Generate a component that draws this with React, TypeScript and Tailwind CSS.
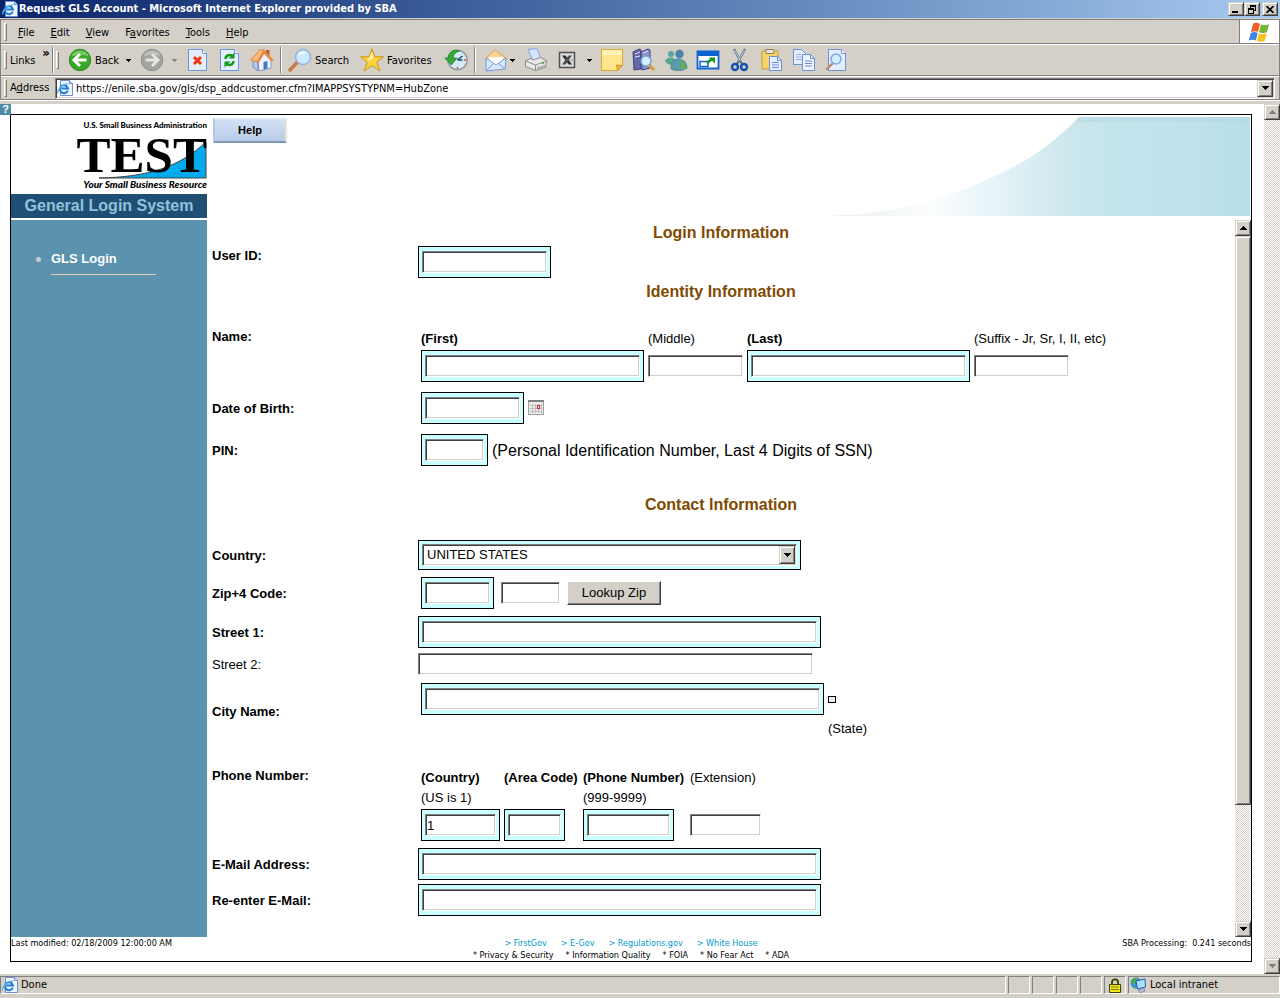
import type { ReactNode } from 'react';

// Shared bevels for the classic grey controls
const SUNKEN =
  'border border-t-[#808080] border-l-[#808080] border-r-white border-b-white shadow-[inset_1px_1px_0_#404040,inset_-1px_-1px_0_#d4d0c8]';
const RAISED =
  'bg-[#d4d0c8] border border-t-[#d4d0c8] border-l-[#d4d0c8] border-r-[#404040] border-b-[#404040] shadow-[inset_1px_1px_0_#fff,inset_-1px_-1px_0_#808080]';
const PANE = 'border border-t-[#808080] border-l-[#808080] border-r-white border-b-white';
const UI_FONT = "font-['DejaVu_Sans_Condensed','Noto_Sans',sans-serif]";

/* ---------- icons ---------- */

function Icon({ children, className = 'size-6' }: { children: ReactNode; className?: string }) {
  return (
    <svg viewBox="0 0 24 24" className={`${className} shrink-0`} aria-hidden="true">
      {children}
    </svg>
  );
}

function IeIcon() {
  return (
    <svg viewBox="0 0 16 16" className="size-4 shrink-0" aria-hidden="true">
      <path d="M3.5.5h9l3 3v12h-12z" fill="#f2f7ff" stroke="#6f8fd0" />
      <path d="M12.500 .5v3h3" fill="#c8dcf8" stroke="#6f8fd0" />
      <path d="M10.800 10.600A4 4 0 1 1 11 8.500H4.500" fill="none" stroke="#1c7bd8" strokeWidth="2" />
      <path d="M1 13.500C-.5 10 6 3.500 11.500 4" fill="none" stroke="#58b4f0" strokeWidth="1.200" />
    </svg>
  );
}

function Caret({ className = 'text-black' }: { className?: string }) {
  return (
    <svg viewBox="0 0 5 3" className={`h-[3px] w-[5px] shrink-0 ${className}`} shapeRendering="crispEdges" aria-hidden="true">
      <path d="M0 0h5v1H4v1H3v1H2V2H1V1H0z" fill="currentColor" />
    </svg>
  );
}

function Arrow({ up = false, className = 'text-black' }: { up?: boolean; className?: string }) {
  return (
    <svg viewBox="0 0 7 4" className={`h-1 w-[7px] ${className}`} shapeRendering="crispEdges" aria-hidden="true">
      <path
        d={up ? 'M3 0h1v1h1v1h1v1h1v1H0V3h1V2h1V1h1z' : 'M0 0h7v1H6v1H5v1H4v1H3V3H2V2H1V1H0z'}
        fill="currentColor"
      />
    </svg>
  );
}

const BackIcon = () => (
  <Icon>
    <circle cx="12" cy="12" r="10.700" fill="#38a826" stroke="#2c8420" />
    <path d="M3 9a9.500 9.500 0 0 1 18 0c-5-3-12-3-18 0z" fill="#8fd878" opacity=".7" />
    <path d="M18.500 12H7M12 6l-6 6 6 6" fill="none" stroke="#fff" strokeWidth="3" />
  </Icon>
);

const ForwardIcon = () => (
  <Icon>
    <circle cx="12" cy="12" r="10.700" fill="#a3a3a0" stroke="#8c8c8a" />
    <path d="M3 9a9.500 9.500 0 0 1 18 0c-5-3-12-3-18 0z" fill="#c8c8c6" opacity=".7" />
    <path d="M5.500 12H17M12 6l6 6-6 6" fill="none" stroke="#e6e4e0" strokeWidth="3" />
  </Icon>
);

const Sheet = () => (
  <>
    <path d="M2.500 1.500h14l4 4v17h-18z" fill="#e4eeff" stroke="#6f94e4" />
    <path d="M16.500 1.500v4h4" fill="#fff" stroke="#6f94e4" />
  </>
);

const StopIcon = () => (
  <Icon>
    <Sheet />
    <path d="M8 9l7 7M15 9l-7 7" stroke="#f03410" strokeWidth="3" />
  </Icon>
);

const RefreshIcon = () => (
  <Icon>
    <Sheet />
    <path d="M7.500 11c0-4 5-5 7-3M15.500 13c0 4-5 5-7 3" fill="none" stroke="#109a18" strokeWidth="2.400" />
    <path d="M16.500 4.500v6h-6zM6.500 19.500v-6h6z" fill="#109a18" />
  </Icon>
);

const HomeIcon = () => (
  <Icon>
    <path d="M16 2h3.500v7H16z" fill="#c05c38" />
    <path d="M8 13l6-8 7 7v8l-12 3z" fill="#eef4ff" stroke="#8098c8" />
    <path d="M3 12l5 2v9l-5-4z" fill="#b4c8f0" stroke="#7088c0" />
    <path d="M.8 12L10 1.500l4 .5-6 12.500z" fill="#fbb878" stroke="#d87830" strokeWidth=".8" />
    <path d="M14 2l9.200 10-2 1L14 5.500 8.500 14.500 7 14z" fill="#f09048" stroke="#d87830" strokeWidth=".6" />
    <path d="M13.500 14l4-1v7.500l-4 1z" fill="#4878c0" />
  </Icon>
);

const SearchIcon = () => (
  <Icon>
    <path d="M9.500 14L2 22" stroke="#c87848" strokeWidth="3.500" strokeLinecap="round" />
    <circle cx="15" cy="9" r="7.500" fill="#cfe8ff" stroke="#90b4e8" strokeWidth="1.600" />
    <path d="M10 8c1-4 6-5 8-3-2 0-6 1-8 3z" fill="#fff" />
  </Icon>
);

const StarIcon = () => (
  <Icon>
    <path
      d="M12 .8l2.800 8H23.500l-6.600 5.200 3 9L12 17.500l-7.800 5.500 3-9L.5 8.800h8.700z"
      fill="#fbd23c"
      stroke="#c89418"
      strokeLinejoin="round"
    />
    <path d="M12 4l1.500 6L7 14l2-4z" fill="#fff2a0" />
  </Icon>
);

const HistoryIcon = () => (
  <Icon>
    <circle cx="13.500" cy="12" r="9.700" fill="#d4ecf8" stroke="#8c9cac" strokeWidth="1.600" />
    <path d="M13.500 12l5-4M13.500 12h5" stroke="#284870" strokeWidth="1.500" />
    <path d="M13.500 19v2M20 12h2" stroke="#e04020" strokeWidth="1.500" />
    <path d="M16 3C9 0 4 5 4.500 10H.8l6.500 7 6-7H9.500C9 6.500 12 4 16 3z" fill="#38a838" stroke="#1c7c24" strokeWidth=".7" />
  </Icon>
);

const MailIcon = () => (
  <Icon>
    <path d="M2 10l9-8 11 8v2H2z" fill="#fbd490" stroke="#d8a050" />
    <path d="M5 9h14v8H5z" fill="#fff" />
    <path d="M2 10l10 7 10-7-1 11-19 2z" fill="#d8eaff" stroke="#7c98dc" />
    <path d="M2 23l8-8M21 21l-7-6" stroke="#7c98dc" />
  </Icon>
);

const PrintIcon = () => (
  <Icon>
    <path d="M4 1.500l9-1 4 11-8 2z" fill="#d4e6ff" stroke="#84a4dc" />
    <path d="M1.500 13l6-3 1 2 8-2.500 6 3-1 7-10 3-10-4z" fill="#e8e8e6" stroke="#8c8c8c" />
    <path d="M1.500 13l10 4 11-4M11.500 17v5" fill="none" stroke="#8c8c8c" />
    <path d="M13 19l8-2v2l-8 3z" fill="#b0b0b0" />
    <path d="M18 15.500l2-.6" stroke="#40a840" strokeWidth="1.500" />
  </Icon>
);

const ExcelIcon = () => (
  <Icon>
    <path d="M4.500 4.500h15v15h-15z" fill="#dcdcdc" stroke="#505050" strokeWidth="1.500" />
    <path d="M7 7.500h3.500L17 16.500h-3.500z" fill="#303030" />
    <path d="M13.500 7.500H17L10.500 16.500H7z" fill="#505050" />
    <path d="M15.500 12H18" stroke="#808080" />
  </Icon>
);

const NoteIcon = () => (
  <Icon>
    <path d="M1.500 1.500h21v16l-5 5h-16z" fill="#ffe68c" stroke="#dca830" />
    <path d="M2 2h20v5H2z" fill="#fff3b8" />
    <path d="M22.500 17.500l-6-.5 1 5.500z" fill="#f0b838" stroke="#c89020" />
  </Icon>
);

const ResearchIcon = () => (
  <Icon>
    <path d="M1 4l6-3 2 1v19l-7 1z" fill="#6468a8" stroke="#404080" />
    <path d="M9 4l7-3 2 1v18l-8 2z" fill="#8c90c8" stroke="#404080" />
    <path d="M3 6l5-2M3 9l5-1M11 5l5-2" stroke="#e4e4f8" />
    <path d="M17 17l5 5" stroke="#d8a030" strokeWidth="3" />
    <circle cx="14" cy="13" r="5" fill="#d4f0ff" stroke="#7ca4d4" strokeWidth="1.500" />
  </Icon>
);

const PeopleIcon = () => (
  <Icon>
    <circle cx="7" cy="6" r="3" fill="#58a8a0" />
    <path d="M.8 13c2-4 8-5 11-1l-3 5c-3 0-6-1-8-4z" fill="#58a890" />
    <circle cx="15.500" cy="6" r="4.200" fill="#4884a8" />
    <path d="M7 21c0-8 4-11 9-10 5 1 7 5 7 9-4 3-11 3.500-16 1z" fill="#589cac" stroke="#407898" strokeWidth=".7" />
    <path d="M17 12c4 2 5 5 5 8l-5 2z" fill="#68b050" />
  </Icon>
);

const FullScreenIcon = () => (
  <Icon>
    <path d="M1.500 3.500h21v17h-21z" fill="#fff" stroke="#0c64d0" strokeWidth="1.800" />
    <path d="M1 3h22v5H1z" fill="#0c64d0" />
    <path d="M4 13.500h8v5H4z" fill="#fff" stroke="#0c64d0" strokeWidth="1.500" />
    <path d="M11 15l5-4" stroke="#109a18" strokeWidth="2.400" />
    <path d="M12.500 9.500h6.500v6z" fill="#109a18" />
  </Icon>
);

const CutIcon = () => (
  <Icon>
    <path d="M6 1l8 15M17 1L9 16" stroke="#5c6c88" strokeWidth="2.200" />
    <path d="M6.500 2l6 11M16.500 2l-6 11" stroke="#d8e4f0" strokeWidth=".8" />
    <circle cx="7" cy="19" r="3" fill="none" stroke="#1450b0" strokeWidth="2.400" />
    <circle cx="16" cy="19" r="3" fill="none" stroke="#1450b0" strokeWidth="2.400" />
  </Icon>
);

const PasteIcon = () => (
  <Icon>
    <path d="M2 3h16v18H2z" fill="#f8d468" stroke="#c89c30" />
    <path d="M6 1.500h8v4H6z" fill="#e8e4d8" stroke="#8c8468" />
    <path d="M9.500 8.500h8l4 4v10h-12z" fill="#e4eeff" stroke="#7090d8" />
    <path d="M17.500 8.500v4h4M12 14.500h7M12 17h7M12 19.500h7" fill="none" stroke="#7090d8" />
  </Icon>
);

const CopyIcon = () => (
  <Icon>
    <path d="M1.500 1.500h8l4 4v11h-12z" fill="#e4eeff" stroke="#7090d8" />
    <path d="M4 6.500h5M4 9h6M4 11.500h6" stroke="#90b4ec" />
    <path d="M10.500 6.500h8l4 4v12h-12z" fill="#eef4ff" stroke="#7090d8" />
    <path d="M18.500 6.500v4h4M13 13h7M13 15.500h7M13 18h7" fill="none" stroke="#7090d8" />
  </Icon>
);

const PreviewIcon = () => (
  <Icon>
    <path d="M4.500 1.500h13l4 4v17h-17z" fill="#e4eeff" stroke="#7090d8" />
    <path d="M17.500 1.500v4h4" fill="#fff" stroke="#7090d8" />
    <path d="M8 16l-5 5" stroke="#c08460" strokeWidth="2.400" strokeLinecap="round" />
    <circle cx="12" cy="11" r="5" fill="#cfeeff" stroke="#80a4e0" strokeWidth="1.500" />
  </Icon>
);

const WindowsIcon = () => (
  <Icon>
    <path d="M5 4c3-2 5-1 7 0l-2 8c-2-1-4-1-7 0z" fill="#f0602c" />
    <path d="M13 4.500c3 1 5 1 8-.5l-2 8c-3 1.500-5 1-8 .5z" fill="#70b830" />
    <path d="M2.800 13c3-1.500 5-1 7 0l-2 7.500c-2-1-4-1-7 0z" fill="#4084e0" />
    <path d="M10.800 13.500c3 1 5 1 8-.5l-2 8c-3 1-5 1-8 0z" fill="#f8c020" />
  </Icon>
);

/* ---------- browser chrome ---------- */

function Grip() {
  return <span className="h-[26px] max-h-[18px] w-[3px] shrink-0 border border-t-white border-l-white border-r-[#808080] border-b-[#808080]" />;
}

function Separator() {
  return <span className="mx-0.5 h-[26px] w-0.5 shrink-0 border-l border-l-[#808080] border-r border-r-white" />;
}

function ToolButton({ label, className = 'w-8 justify-center', children }: { label: string; className?: string; children: ReactNode }) {
  return (
    <button type="button" aria-label={label} className={`flex h-full shrink-0 items-center ${className}`}>
      {children}
    </button>
  );
}

function TitleBar() {
  return (
    <header className="flex h-[18px] items-center bg-linear-to-r from-[#0a246a] to-[#a6caf0] px-0.5">
      <IeIcon />
      <h1 className="ml-px flex-1 text-[11px] font-bold text-white">
        Request GLS Account - Microsoft Internet Explorer provided by SBA
      </h1>
      <button type="button" aria-label="Minimize" className={`flex h-3.5 w-4 items-end justify-center pb-0.5 ${RAISED}`}>
        <span className="mr-0.5 h-0.5 w-1.5 bg-black" />
      </button>
      <button type="button" aria-label="Restore" className={`flex h-3.5 w-4 items-center justify-center ${RAISED}`}>
        <svg viewBox="0 0 8 9" className="h-[9px] w-2" shapeRendering="crispEdges" aria-hidden="true">
          <path d="M2 0h6v6H6V5h1V2H3v1H2zM0 3h6v6H0zM1 5v3h4V5z" fillRule="evenodd" />
        </svg>
      </button>
      <button type="button" aria-label="Close" className={`ml-0.5 flex h-3.5 w-4 items-center justify-center ${RAISED}`}>
        <svg viewBox="0 0 8 7" className="h-[7px] w-2" aria-hidden="true">
          <path d="M.5 0l7 7M7.500 0l-7 7" stroke="#000" strokeWidth="1.600" />
        </svg>
      </button>
    </header>
  );
}

const MENU = [
  ['', 'F', 'ile'],
  ['', 'E', 'dit'],
  ['', 'V', 'iew'],
  ['F', 'a', 'vorites'],
  ['', 'T', 'ools'],
  ['', 'H', 'elp'],
];

function MenuBar() {
  return (
    <div className="flex h-6 border-b border-b-[#808080] pl-[3px]">
      <div className="flex flex-1 items-center">
        <Grip />
        <nav className="ml-[11px] flex gap-4 pt-0.5">
          {MENU.map(([pre, key, post]) => (
            <button key={key} type="button">
              {pre}
              <span className="underline underline-offset-1">{key}</span>
              {post}
            </button>
          ))}
        </nav>
      </div>
      <div className="flex w-10 items-center justify-center border-l border-l-[#808080] bg-white">
        <WindowsIcon />
      </div>
    </div>
  );
}

function Toolbar() {
  return (
    <div className="flex h-8 items-center border-t border-t-white border-b border-b-[#808080] pl-[3px]">
      <Grip />
      <span className="ml-[3px] w-8 pt-0.5">Links</span>
      <button type="button" aria-label="More links" className="w-2 self-start text-[13px] leading-4 font-bold">»</button>
      <Separator />
      <Grip />
      <ToolButton label="Back" className="ml-[5px] w-[72px] gap-[3px] pl-1">
        <BackIcon />
        <span className="w-7 pt-0.5 text-left">Back</span>
        <Caret />
      </ToolButton>
      <ToolButton label="Forward" className="w-[46px] gap-2 pl-1">
        <ForwardIcon />
        <Caret className="text-[#808080]" />
      </ToolButton>
      <ToolButton label="Stop"><StopIcon /></ToolButton>
      <ToolButton label="Refresh"><RefreshIcon /></ToolButton>
      <ToolButton label="Home"><HomeIcon /></ToolButton>
      <Separator />
      <ToolButton label="Search" className="w-[72px] gap-[3px] pl-1">
        <SearchIcon />
        <span className="pt-0.5">Search</span>
      </ToolButton>
      <ToolButton label="Favorites" className="w-[84px] gap-[3px] pl-1">
        <StarIcon />
        <span className="pt-0.5">Favorites</span>
      </ToolButton>
      <ToolButton label="History"><HistoryIcon /></ToolButton>
      <Separator />
      <ToolButton label="Mail" className="ml-0.5 w-10 gap-0.5 pl-1">
        <MailIcon />
        <Caret />
      </ToolButton>
      <ToolButton label="Print"><PrintIcon /></ToolButton>
      <ToolButton label="Edit with Excel" className="w-11 gap-2 pl-[3px]">
        <ExcelIcon />
        <Caret />
      </ToolButton>
      <ToolButton label="Discuss"><NoteIcon /></ToolButton>
      <ToolButton label="Research"><ResearchIcon /></ToolButton>
      <ToolButton label="Messenger"><PeopleIcon /></ToolButton>
      <ToolButton label="Full screen"><FullScreenIcon /></ToolButton>
      <ToolButton label="Cut"><CutIcon /></ToolButton>
      <ToolButton label="Paste"><PasteIcon /></ToolButton>
      <ToolButton label="Copy"><CopyIcon /></ToolButton>
      <ToolButton label="Print preview"><PreviewIcon /></ToolButton>
    </div>
  );
}

function AddressBar() {
  return (
    <div className="flex h-6 items-center border-t border-t-white border-b border-b-[#808080] pr-1 pl-[3px]">
      <Grip />
      <label htmlFor="address" className="ml-[3px] w-[45px]">
        A<span className="underline underline-offset-1">d</span>dress
      </label>
      <div className={`flex h-[21px] flex-1 items-center bg-white p-px ${SUNKEN}`}>
        <IeIcon />
        <input
          id="address"
          className="ml-[3px] min-w-0 flex-1 pt-0.5 outline-none"
          defaultValue="https://enile.sba.gov/gls/dsp_addcustomer.cfm?IMAPPSYSTYPNM=HubZone"
        />
        <button type="button" aria-label="Address history" className={`flex h-[17px] w-4 items-center justify-center ${RAISED}`}>
          <Arrow />
        </button>
      </div>
    </div>
  );
}

function StatusBar() {
  return (
    <footer className="bg-[#d4d0c8] pt-0.5 pb-1">
      <div className="flex h-[18px] gap-0.5">
        <div className={`flex flex-1 items-center gap-[3px] pl-px ${PANE}`}>
          <IeIcon />
          Done
        </div>
        <div className={`w-[22px] ${PANE}`} />
        <div className={`w-[22px] ${PANE}`} />
        <div className={`w-[22px] ${PANE}`} />
        <div className={`w-[22px] ${PANE}`} />
        <div className={`flex w-[22px] items-center justify-center ${PANE}`}>
          <svg viewBox="0 0 12 15" className="h-[15px] w-3" aria-label="Secure connection" role="img">
            <path d="M3 7V4c0-3.500 6-3.500 6 0v3" fill="none" stroke="#404000" strokeWidth="1.800" />
            <path d="M.5 6.500h11v8H.5z" fill="#f0e820" stroke="#404000" />
            <path d="M2 9h8M2 11.500h8" stroke="#807800" />
          </svg>
        </div>
        <div className={`flex w-[152px] items-center gap-1 pl-px ${PANE}`}>
          <svg viewBox="0 0 16 16" className="size-4" aria-hidden="true">
            <circle cx="6" cy="6" r="5.500" fill="#3c8ce0" />
            <path d="M1 4c2-3 5-4 7-3L6 5 3 8zM3 9l3 1-1 2z" fill="#48b040" />
            <path d="M6 4l9-2 .5 8-8 2z" fill="#a8e0ff" stroke="#2858b0" />
            <path d="M8 13l6-2 1 3-5 2z" fill="#b8b8d8" stroke="#7070a0" strokeWidth=".6" />
          </svg>
          Local intranet
        </div>
      </div>
    </footer>
  );
}

function ScrollBar({ disabled = false }: { disabled?: boolean }) {
  const tone = disabled ? 'text-[#808080]' : 'text-black';
  return (
    <div className="flex w-4 shrink-0 flex-col bg-[repeating-conic-gradient(#d4d0c8_0_25%,#fff_0_50%)] bg-[length:2px_2px]">
      <button type="button" disabled={disabled} aria-label="Scroll up" className={`flex h-4 items-center justify-center ${RAISED}`}>
        <Arrow up className={tone} />
      </button>
      <div className="flex-1">{!disabled && <div className={`h-[83%] ${RAISED}`} />}</div>
      <button type="button" disabled={disabled} aria-label="Scroll down" className={`flex h-4 items-center justify-center ${RAISED}`}>
        <Arrow className={tone} />
      </button>
    </div>
  );
}

/* ---------- form parts ---------- */

function Field({ id, width, label, required = false, value }: { id: string; width: string; label?: string; required?: boolean; value?: string }) {
  const input = (
    <input
      id={id}
      name={id}
      aria-label={label}
      required={required}
      defaultValue={value}
      className={`block h-[22px] bg-white px-px outline-none ${width} ${SUNKEN}`}
    />
  );
  // mandatory fields sit in a framed cyan box
  return required ? <div className="w-fit border border-black bg-[#ccffff] px-[3px] py-1">{input}</div> : input;
}

function Row({ label, htmlFor, className, optional = false, children }: { label: string; htmlFor: string; className: string; optional?: boolean; children: ReactNode }) {
  return (
    <div className={`grid grid-cols-[206px_1fr] ${className}`}>
      <label htmlFor={htmlFor} className={optional ? 'pt-0.5' : 'pt-0.5 font-bold'}>
        {label}
      </label>
      {children}
    </div>
  );
}

function SectionTitle({ className = '', children }: { className?: string; children: ReactNode }) {
  return <h2 className={`-mb-0.5 text-center text-base leading-[26px] font-bold text-[#7f4a00] ${className}`}>{children}</h2>;
}

function AccountForm() {
  return (
    <form className="min-w-0 flex-1 px-[5px] text-[13px] leading-5">
      <SectionTitle>Login Information</SectionTitle>
      <Row label="User ID:" htmlFor="userId" className="items-start">
        <div className="pt-0.5">
          <Field id="userId" width="w-[125px]" required />
        </div>
      </Row>

      <SectionTitle className="pt-px">Identity Information</SectionTitle>
      <Row label="Name:" htmlFor="firstName" className="mt-[22px] items-start">
        <div className="grid grid-cols-[223px_95px_223px_1fr] items-center gap-x-1 gap-y-px pt-1 pl-[3px]">
          <label htmlFor="firstName" className="font-bold">(First)</label>
          <label htmlFor="middleName">(Middle)</label>
          <label htmlFor="lastName" className="font-bold">(Last)</label>
          <label htmlFor="suffix">(Suffix - Jr, Sr, I, II, etc)</label>
          <Field id="firstName" width="w-[215px]" required />
          <Field id="middleName" width="w-[95px]" />
          <Field id="lastName" width="w-[215px]" required />
          <Field id="suffix" width="w-[95px]" />
        </div>
      </Row>
      <Row label="Date of Birth:" htmlFor="birthDate" className="mt-2.5 items-center">
        <div className="flex items-center gap-1 pl-[3px]">
          <Field id="birthDate" width="w-[95px]" required />
          <button type="button" aria-label="Pick a date" className="pb-0.5">
            <svg viewBox="0 0 16 15" className="h-[15px] w-4" shapeRendering="crispEdges" aria-hidden="true">
              <path d="M0 0h16v15H0z" fill="#a0a0a0" />
              <path d="M1 2h14v12H1z" fill="#ececec" />
              <path d="M0 0h16v2H0z" fill="#808080" />
              <path d="M2 5h12M2 8h12M2 11h12M4 4v9M7 4v9M10 4v9M13 4v9" stroke="#c0c0c0" />
              <path d="M9 5h3v4H9z" fill="#e02030" />
              <path d="M10 6h1v2h-1z" fill="#fff" />
            </svg>
          </button>
        </div>
      </Row>
      <Row label="PIN:" htmlFor="pin" className="mt-2.5 items-center">
        <div className="flex items-center gap-1 pl-[3px]">
          <Field id="pin" width="w-[59px]" required />
          <span className="pt-0.5 text-base leading-5">(Personal Identification Number, Last 4 Digits of SSN)</span>
        </div>
      </Row>

      <SectionTitle className="pt-[26px]">Contact Information</SectionTitle>
      <Row label="Country:" htmlFor="country" className="mt-6 items-center">
        <div className="w-fit border border-black bg-[#ccffff] p-[3px]">
          <div className="relative">
            <select id="country" className={`block h-[22px] w-[375px] appearance-none bg-white px-1 outline-none ${SUNKEN}`}>
              <option>UNITED STATES</option>
            </select>
            <span className={`pointer-events-none absolute top-0.5 right-0.5 flex h-[18px] w-4 items-center justify-center ${RAISED}`}>
              <Arrow />
            </span>
          </div>
        </div>
      </Row>
      <Row label="Zip+4 Code:" htmlFor="zip" className="mt-[7px] items-center">
        <div className="flex items-center gap-[7px] pl-[3px]">
          <Field id="zip" width="w-[65px]" required />
          <Field id="zip4" width="w-[59px]" label="Zip plus 4" />
          <button
            type="button"
            className="h-6 w-[94px] border border-t-white border-l-white border-r-[#404040] border-b-[#404040] bg-[#d4d0c8] shadow-[inset_-1px_-1px_0_#808080]"
          >
            Lookup Zip
          </button>
        </div>
      </Row>
      <Row label="Street 1:" htmlFor="street1" className="mt-[7px] items-center">
        <Field id="street1" width="w-[395px]" required />
      </Row>
      <Row label="Street 2:" htmlFor="street2" optional className="mt-[5px] items-center">
        <Field id="street2" width="w-[395px]" />
      </Row>
      <Row label="City Name:" htmlFor="city" className="mt-2 items-center">
        <div className="grid grid-cols-[403px_1fr] items-center gap-x-1 gap-y-1 pl-[3px]">
          <Field id="city" width="w-[395px]" required />
          <select id="state" className="h-[7px] w-2 appearance-none border border-black bg-[#ececec]" />
          <label htmlFor="state" className="col-start-2">(State)</label>
        </div>
      </Row>
      <Row label="Phone Number:" htmlFor="phone" className="mt-[25px] items-start">
        <div className="grid grid-cols-[79px_75px_103px_1fr] gap-x-1 pt-1 pl-[3px]">
          <label htmlFor="phoneCountry" className="font-bold">(Country)</label>
          <label htmlFor="areaCode" className="font-bold whitespace-nowrap">(Area Code)</label>
          <label htmlFor="phone" className="font-bold whitespace-nowrap">(Phone Number)</label>
          <label htmlFor="extension">(Extension)</label>
          <span>(US is 1)</span>
          <span className="col-start-3">(999-9999)</span>
        </div>
        <div className="col-start-2 grid grid-cols-[79px_75px_103px_1fr] items-center gap-x-1 pt-px pl-[3px]">
          <Field id="phoneCountry" width="w-[71px]" value="1" required />
          <Field id="areaCode" width="w-[53px]" required />
          <Field id="phone" width="w-[83px]" required />
          <Field id="extension" width="w-[71px]" />
        </div>
      </Row>
      <Row label="E-Mail Address:" htmlFor="email" className="mt-[7px] items-center">
        <Field id="email" width="w-[395px]" required />
      </Row>
      <Row label="Re-enter E-Mail:" htmlFor="email2" className="mt-1 items-center">
        <Field id="email2" width="w-[395px]" required />
      </Row>
    </form>
  );
}

/* ---------- page frame ---------- */

function Logo() {
  return (
    <div className="flex h-[79px] flex-col items-end pt-1 text-black">
      <span className="font-['Lato',sans-serif] text-[8px] leading-3 font-black">U.S. Small Business Administration</span>
      <div className="relative">
        <svg viewBox="0 0 108 40" className="absolute right-0 bottom-0 h-10 w-[108px]" aria-hidden="true">
          <path d="M0 39C50 38 80 28 107 3v36z" fill="#00aaee" stroke="#444" />
        </svg>
        <span className="relative block font-['Liberation_Serif',serif] text-[51px] leading-[48px] font-bold">TEST</span>
      </div>
      <span className="font-['Lato',sans-serif] text-[10px] leading-[10px] font-black italic">Your Small Business Resource</span>
    </div>
  );
}

function Swoosh() {
  return (
    <svg viewBox="0 0 430 100" className="mt-0.5 mr-px h-[100px] w-[430px] shrink-0" aria-hidden="true">
      <defs>
        <linearGradient id="swoosh" gradientUnits="userSpaceOnUse" x1="0" y1="0" x2="430" y2="0">
          <stop offset="0" stopColor="#e6edee" />
          <stop offset=".26" stopColor="#fcfdfe" />
          <stop offset=".46" stopColor="#def0f5" />
          <stop offset=".58" stopColor="#cbe7ed" />
          <stop offset=".7" stopColor="#c3e4ed" />
          <stop offset=".88" stopColor="#bfe2ec" />
          <stop offset="1" stopColor="#b5dfe9" />
        </linearGradient>
      </defs>
      <path d="M0 99C60 98 100 90 147 71 190 54 222 38 259 0H430V99z" fill="url(#swoosh)" />
      <path d="M259 0H430V5H255z" fill="#b4d8e0" opacity=".5" />
    </svg>
  );
}

const GOV_LINKS = ['FirstGov', 'E-Gov', 'Regulations.gov', 'White House'];
const POLICY_LINKS = ['Privacy & Security', 'Information Quality', 'FOIA', 'No Fear Act', 'ADA'];

function PageFooter() {
  return (
    <div className={`grid h-6 grid-cols-[1fr_auto_1fr] text-[9px] leading-3 ${UI_FONT}`}>
      <span>Last modified: 02/18/2009 12:00:00 AM</span>
      <div className="flex flex-col items-center">
        <div className="flex gap-3.5 text-[#0099cc]">
          {GOV_LINKS.map((text) => (
            <a key={text} href="#">&gt; {text}</a>
          ))}
        </div>
        <div className="flex gap-3">
          {POLICY_LINKS.map((text) => (
            <a key={text} href="#">* {text}</a>
          ))}
        </div>
      </div>
      <span className="text-right">SBA Processing:&nbsp; 0.241 seconds</span>
    </div>
  );
}

export default function App() {
  return (
    <div className={`flex min-h-screen flex-col bg-white text-[11px] leading-4 text-black ${UI_FONT}`}>
      <TitleBar />
      <div className="border-t border-b border-t-[#d4d0c8] border-b-white">
        <div className="border border-b-0 border-[#808080] bg-[#d4d0c8]">
          <MenuBar />
          <Toolbar />
          <AddressBar />
        </div>
      </div>
      <div className="h-[3px] bg-[#d4d0c8]" />

      <div className="flex flex-1">
        <main className="relative flex min-w-0 flex-1 font-['Liberation_Sans',Arial,sans-serif]">
          <button
            type="button"
            aria-label="Page help"
            className="absolute top-0 left-0 size-[11px] bg-[#4f8ba8] text-[11px] leading-[11px] font-bold text-white"
          >
            ?
          </button>
          <div className="mt-2.5 mr-3 mb-3 ml-2.5 flex min-w-0 flex-1 flex-col border border-black">
            <div className="flex flex-1">
              <aside className="flex w-[196px] shrink-0 flex-col">
                <Logo />
                <p className="h-6 bg-[#1f4f75] text-center text-base leading-6 font-bold text-[#8fc3da]">General Login System</p>
                <nav className="mt-0.5 flex-1 bg-[#5b92ad] pt-[29px] pl-[25px]">
                  <a href="#" className="flex items-center gap-2.5 text-[13px] leading-5 font-bold text-white">
                    <span className="size-[5px] rounded-full bg-[#cccccc]" />
                    GLS Login
                  </a>
                  <div className="mt-[5px] ml-[15px] w-[105px] border-t border-[#e6cbb4]" />
                </nav>
              </aside>
              <div className="flex min-w-0 flex-1 flex-col">
                <div className="flex h-[105px] items-start justify-between">
                  <button
                    type="button"
                    className="mt-[3px] ml-1.5 h-[25px] w-[74px] border-2 border-t-[#dfe8f6] border-r-[#e8e6cf] border-b-[#8296b8] border-l-[#b4c6e2] bg-linear-to-b from-[#d3e0f4] to-[#b9cbe8] pb-0.5 text-[11px] font-bold"
                  >
                    Help
                  </button>
                  <Swoosh />
                </div>
                <div className="flex flex-1">
                  <AccountForm />
                  <ScrollBar />
                </div>
              </div>
            </div>
            <PageFooter />
          </div>
        </main>
        <ScrollBar disabled />
      </div>
      <StatusBar />
    </div>
  );
}
